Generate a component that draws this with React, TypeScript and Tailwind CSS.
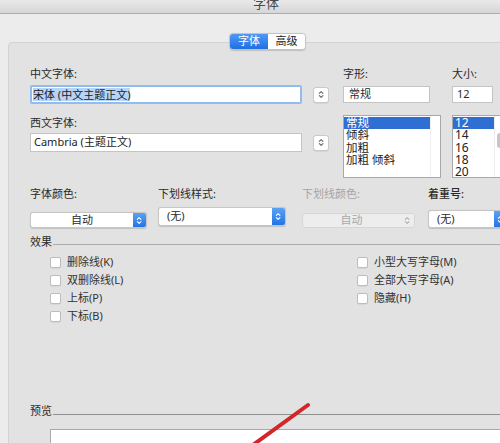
import React from "react";

const FONT = '"Noto Sans", "Noto Sans CJK SC", sans-serif';

function Chevrons({ color = "#555", size = 9 }: { color?: string; size?: number }) {
  return (
    <svg width={size * 0.7} height={size} viewBox="0 0 7 10" fill="none">
      <path d="M1.5 3.8 L3.5 1.8 L5.5 3.8" stroke={color} strokeWidth="1.2" strokeLinecap="round" strokeLinejoin="round" />
      <path d="M1.5 6.2 L3.5 8.2 L5.5 6.2" stroke={color} strokeWidth="1.2" strokeLinecap="round" strokeLinejoin="round" />
    </svg>
  );
}

function Stepper() {
  return (
    <div className="w-[16px] h-[16px] bg-white border border-[#c9c9c9] rounded-[3px] flex items-center justify-center shadow-[0_0.5px_0.5px_rgba(0,0,0,0.12)]">
      <Chevrons color="#666" size={9} />
    </div>
  );
}

function Popup({
  text,
  w,
  h,
  center = false,
  disabled = false,
}: {
  text: string;
  w: string;
  h: string;
  center?: boolean;
  disabled?: boolean;
}) {
  return (
    <div
      className={`${w} ${h} flex rounded-[3px] border ${
        disabled ? "border-[#d6d6d6] bg-[#ededed]" : "border-[#c6c6c6] bg-white shadow-[0_0.5px_1px_rgba(0,0,0,0.15)]"
      } overflow-hidden`}
    >
      <div
        className={`flex-1 flex items-center text-[11px] ${center ? "justify-center" : "pl-[8px]"} ${
          disabled ? "text-[#a8a8a8]" : "text-[#2a2a2a]"
        }`}
      >
        {text}
      </div>
      {disabled ? (
        <div className="w-[14px] flex items-center justify-center">
          <Chevrons color="#b0b0b0" size={9} />
        </div>
      ) : (
        <div className="w-[13px] flex items-center justify-center bg-gradient-to-b from-[#5aa2f5] to-[#2273e6]">
          <Chevrons color="#ffffff" size={9} />
        </div>
      )}
    </div>
  );
}

function Check({ label }: { label: string }) {
  return (
    <div className="h-[18px] flex items-center">
      <div className="w-[11px] h-[11px] bg-white border border-[#bdbdbd] rounded-[2px] shadow-[0_0.5px_0.5px_rgba(0,0,0,0.1)]" />
      <span className="ml-[6px] text-[11px] text-[#333]">{label}</span>
    </div>
  );
}

export default function App() {
  return (
    <div
      className="relative w-[500px] h-[443px] overflow-hidden bg-[#ececec] text-[#2a2a2a]"
      style={{ fontFamily: FONT }}
    >
      {/* title bar */}
      <div className="h-[14px] bg-gradient-to-b from-[#e9e9e9] to-[#d6d6d6] border-b border-[#adadad] flex justify-center overflow-hidden">
        <span className="ml-[32px] -mt-[4px] text-[13px] leading-[14px] text-[#4a4a4a]">字体</span>
      </div>

      {/* tabs */}
      <div className="pt-[19px] relative z-10 flex">
        <div className="ml-[229px] flex h-[17px] rounded-[4px] overflow-hidden border border-[#c4c4c4] shadow-[0_0.5px_1px_rgba(0,0,0,0.15)] text-[11px]">
          <div className="w-[38px] flex items-center justify-center text-white bg-gradient-to-b from-[#4f98f3] to-[#1e6fe4]">
            字体
          </div>
          <div className="w-[37px] flex items-center justify-center bg-white text-[#222]">高级</div>
        </div>
      </div>

      {/* panel */}
      <div className="-mt-[8px] ml-[8px] w-[510px] h-[420px] bg-[#e2e2e2] border border-[#d2d2d2] rounded-tl-[4px] pl-[21px] pt-[24px]">
        {/* top section */}
        <div className="flex">
          {/* left column */}
          <div className="w-[299px] flex flex-col">
            <div className="h-[14px] leading-[14px] text-[11px]">中文字体:</div>
            <div className="mt-[4px] flex items-center justify-between">
              <div className="w-[272px] h-[19px] bg-white border-2 border-[#93bcee] rounded-[2px] flex items-center pl-[1px]">
                <span className="bg-[#b6d4f7] text-[11px] leading-[13px] text-[#222]">宋体 (中文主题正文)</span>
              </div>
              <Stepper />
            </div>
            <div className="mt-[12px] h-[14px] leading-[14px] text-[11px]">西文字体:</div>
            <div className="mt-[3px] flex items-center justify-between">
              <div className="w-[272px] h-[19px] bg-white border border-[#c4c4c4] flex items-center pl-[3px]">
                <span className="text-[11px] text-[#222]">Cambria (主题正文)</span>
              </div>
              <Stepper />
            </div>
          </div>

          {/* middle column */}
          <div className="ml-[14px] w-[98px] flex flex-col">
            <div className="h-[14px] leading-[14px] text-[11px]">字形:</div>
            <div className="mt-[5px] w-[87px] h-[17px] bg-white border border-[#c4c4c4] flex items-center pl-[5px] text-[11px]">
              常规
            </div>
            <div className="mt-[12px] w-[98px] h-[63px] bg-white border border-[#a8a8a8] flex">
              <div className="flex-1 pt-[1px] text-[11.5px] leading-[12.3px] text-[#222]">
                <div className="bg-[#2f6fd4] text-white pl-[2px]">常规</div>
                <div className="pl-[2px]">倾斜</div>
                <div className="pl-[2px]">加粗</div>
                <div className="pl-[2px]">加粗 倾斜</div>
              </div>
              <div className="w-[10px] border-l border-[#f0f0f0]" />
            </div>
          </div>

          {/* right column */}
          <div className="ml-[11px] w-[60px] flex flex-col">
            <div className="h-[14px] leading-[14px] text-[11px]">大小:</div>
            <div className="mt-[5px] w-[41px] h-[17px] bg-white border border-[#c4c4c4] flex items-center pl-[4px] text-[11px]">
              12
            </div>
            <div className="mt-[12px] w-[60px] h-[63px] bg-white border border-[#a8a8a8] flex">
              <div className="w-[41px] pt-[1px] text-[12px] leading-[12.3px] text-[#222]">
                <div className="bg-[#2f6fd4] text-white pl-[2px]">12</div>
                <div className="pl-[2px]">14</div>
                <div className="pl-[2px]">16</div>
                <div className="pl-[2px]">18</div>
                <div className="pl-[2px]">20</div>
              </div>
              <div className="flex-1 border-l border-[#ededed] pt-[17px] pl-[2px]">
                <div className="w-[8px] h-[15px] rounded-[3px] bg-[#c6c6c6]" />
              </div>
            </div>
          </div>
        </div>

        {/* row 3 */}
        <div className="mt-[9px] flex items-start">
          <div className="w-[117px] flex flex-col">
            <div className="h-[14px] leading-[14px] text-[11px]">字体颜色:</div>
            <div className="mt-[11px]">
              <Popup text="自动" w="w-[117px]" h="h-[16px]" center />
            </div>
          </div>
          <div className="ml-[11px] w-[128px] flex flex-col">
            <div className="h-[14px] leading-[14px] text-[11px]">下划线样式:</div>
            <div className="mt-[6px]">
              <Popup text="(无)" w="w-[128px]" h="h-[19px]" />
            </div>
          </div>
          <div className="ml-[16px] w-[113px] flex flex-col">
            <div className="h-[14px] leading-[14px] text-[11px] text-[#a5a5a5]">下划线颜色:</div>
            <div className="mt-[12px]">
              <Popup text="自动" w="w-[113px]" h="h-[15px]" center disabled />
            </div>
          </div>
          <div className="ml-[13px] w-[80px] flex flex-col">
            <div className="h-[14px] leading-[14px] text-[11px] font-medium">着重号:</div>
            <div className="mt-[9px]">
              <Popup text="(无)" w="w-[80px]" h="h-[18px]" />
            </div>
          </div>
        </div>

        {/* effects */}
        <div className="mt-[7px] h-[14px] flex items-end">
          <span className="text-[11px] leading-[14px]">效果</span>
          <div className="flex-1 h-px bg-[#ababab] ml-[1px] mb-[4px]" />
        </div>
        <div className="mt-[4px] flex">
          <div className="ml-[20px] w-[307px] flex flex-col">
            <Check label="删除线(K)" />
            <Check label="双删除线(L)" />
            <Check label="上标(P)" />
            <Check label="下标(B)" />
          </div>
          <div className="flex flex-col">
            <Check label="小型大写字母(M)" />
            <Check label="全部大写字母(A)" />
            <Check label="隐藏(H)" />
          </div>
        </div>

        {/* preview */}
        <div className="mt-[79px] h-[14px] flex items-end">
          <span className="text-[11px] leading-[14px]">预览</span>
          <div className="flex-1 h-px bg-[#8f8f8f] ml-[1px] mb-[3px]" />
        </div>
        <div className="mt-[11px] ml-[20px] h-[60px] bg-white border border-[#a9a9a9]" />
      </div>

      {/* red annotation stroke */}
      <svg className="absolute left-0 top-0 pointer-events-none" width="500" height="443">
        <line x1="308" y1="405" x2="246" y2="450" stroke="#d3262b" strokeWidth="4" strokeLinecap="round" />
      </svg>
    </div>
  );
}
